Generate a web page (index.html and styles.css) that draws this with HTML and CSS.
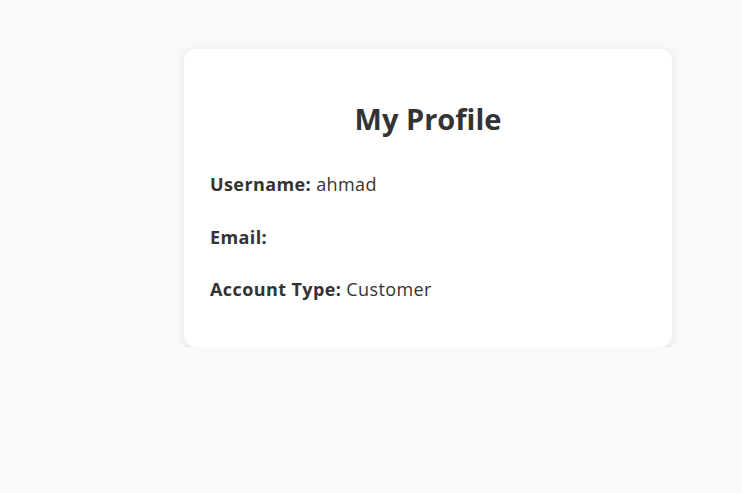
FILE: index.html
```html
<!DOCTYPE html>
<html lang="en">
<head>
<meta charset="utf-8">
<title>My Profile</title>
<link rel="stylesheet" href="styles.css">
</head>
<body>
<main class="page">
  <section class="card">
    <h2 class="title">My Profile</h2>
    <div class="rows">
      <p class="row"><strong>Username:</strong> ahmad</p>
      <p class="row"><strong>Email:</strong> </p>
      <p class="row"><strong>Account Type:</strong> Customer</p>
    </div>
  </section>
</main>
</body>
</html>
```
FILE: styles.css
```css
html, body {
  margin: 0;
  padding: 0;
  background: #f9f9f9;
}
body {
  font-family: "Open Sans", "Noto Sans", sans-serif;
  color: #333;
}
.page {
  padding: 49px 0 0 184px;
}
.card {
  width: 488px;
  box-sizing: border-box;
  background: #fff;
  border-radius: 12px;
  box-shadow: 0 2px 10px rgba(0, 0, 0, 0.1);
  padding: 50px 26px 44px;
}
.title {
  margin: 0 0 32px;
  text-align: center;
  font-size: 29px;
  line-height: 40px;
  font-weight: 700;
}
.rows {
  display: flex;
  flex-direction: column;
  gap: 25.5px;
}
.row {
  margin: 0;
  font-size: 18px;
  line-height: 27px;
  letter-spacing: 0.4px;
}
.row strong {
  font-weight: 700;
}
```
